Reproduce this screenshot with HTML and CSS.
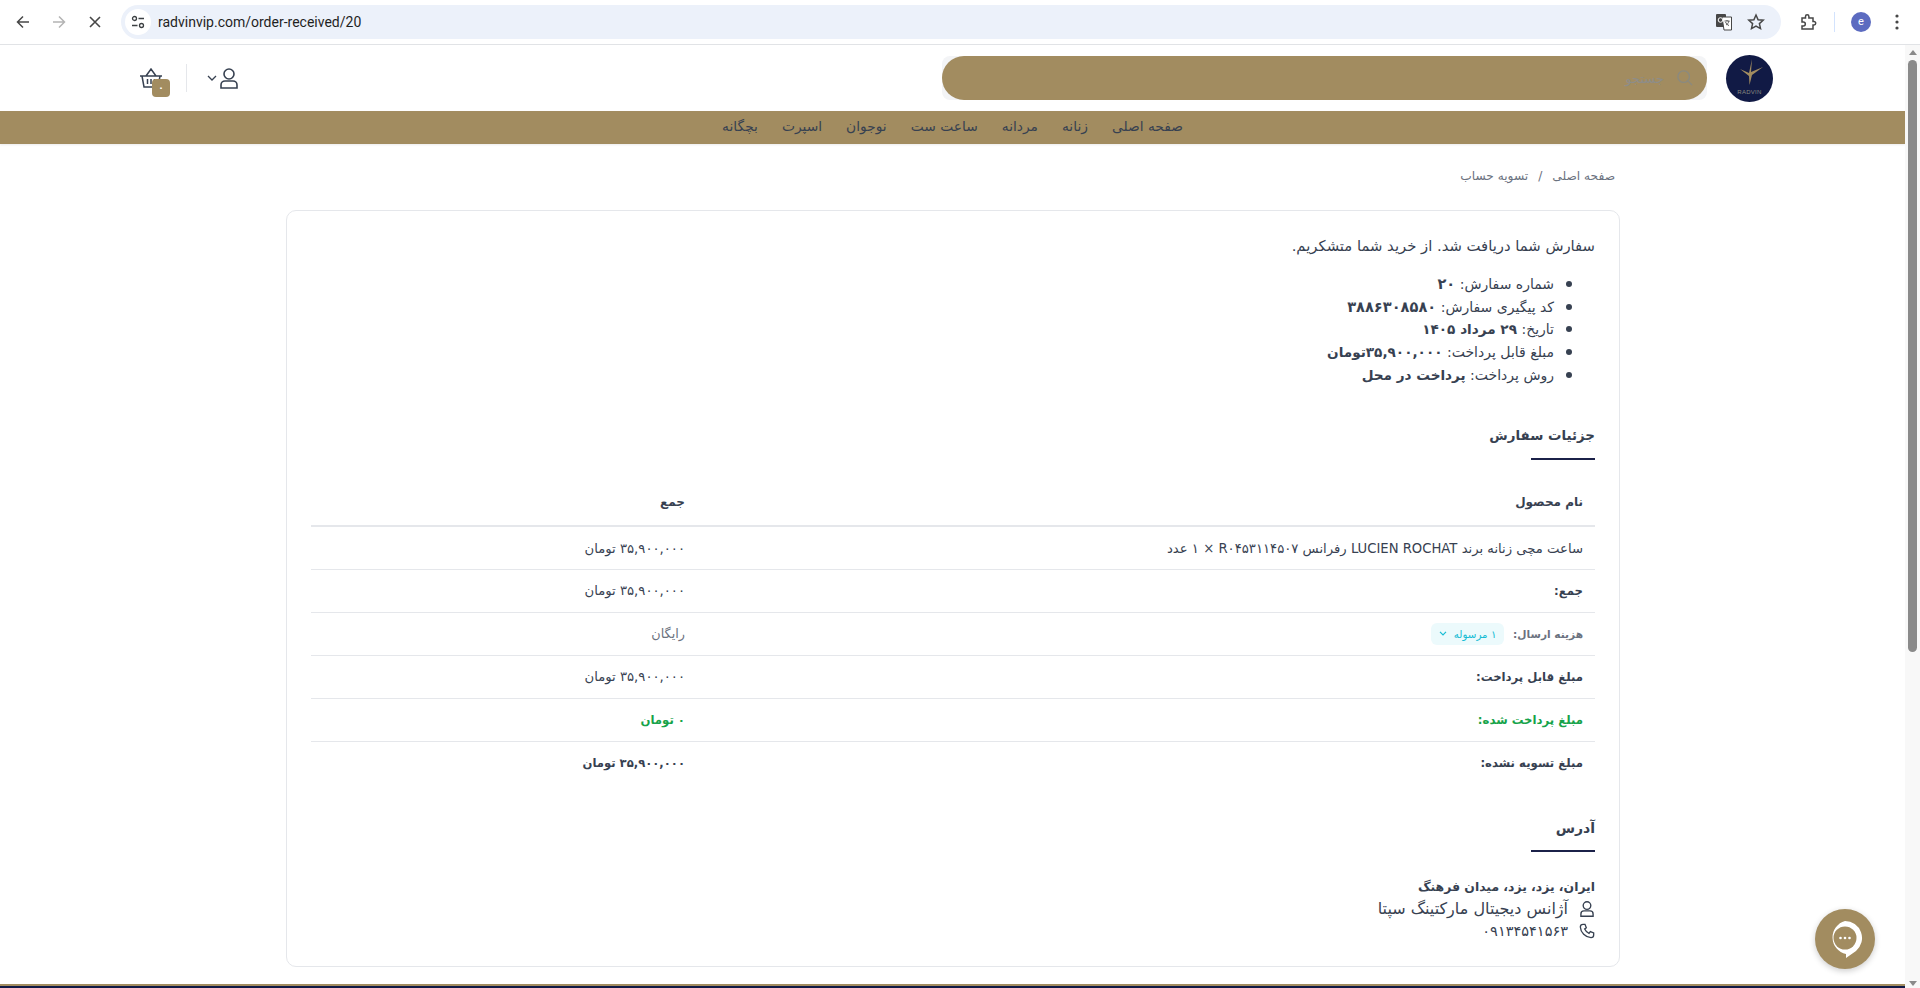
FILE: index.html
```html
<!DOCTYPE html>
<html lang="fa">
<head>
    <meta charset="UTF-8">
    <meta name="viewport" content="width=device-width, initial-scale=1.0">
    <title>radvinvip.com/order-received/20</title>
    <link rel="stylesheet" href="styles.css">
</head>
<body>
    <div class="browser-bar">
        <button class="bar-btn"><svg width="16" height="16" viewBox="0 0 16 16" fill="none" stroke="#474747" stroke-width="1.5"><path d="M14 8H2.500M8 2.500 2.500 8 8 13.500"/></svg></button>
        <button class="bar-btn"><svg width="16" height="16" viewBox="0 0 16 16" fill="none" stroke="#b4b4b4" stroke-width="1.5"><path d="M2 8h11.500M8 2.500 13.500 8 8 13.500"/></svg></button>
        <button class="bar-btn"><svg width="16" height="16" viewBox="0 0 16 16" fill="none" stroke="#474747" stroke-width="1.6"><path d="M3 3l10 10M13 3 3 13"/></svg></button>
        <div class="url-box">
            <span class="url-chip"><svg width="14" height="14" viewBox="0 0 14 14" fill="none" stroke="#3c4043" stroke-width="1.3"><circle cx="3.500" cy="3.500" r="2"/><path d="M7.500 3.500H13M1 10.500h5.500"/><circle cx="10.500" cy="10.500" r="2"/></svg></span>
            <span class="url-text">radvinvip.com/order-received/20</span>
            <span class="url-actions">
                <svg width="18" height="18" viewBox="0 0 18 18"><rect x="1" y="1" width="10" height="13" rx="1" fill="#474747"/><path d="M7 4h9.500v13H9z" fill="#fff" stroke="#474747"/><path d="M9.500 8h5M12 7v1M14 8c-.5 2-2 3.500-3 4M10.500 9c.6 1.500 2 3 3.500 3.500" stroke="#474747" fill="none" stroke-width=".9"/><circle cx="5.500" cy="7" r="2.300" fill="none" stroke="#fff"/></svg>
                <svg width="18" height="18" viewBox="0 0 18 18" fill="none" stroke="#474747" stroke-width="1.5"><path d="M9 2l2.100 4.700 5.100.5-3.800 3.400 1.100 5L9 13l-4.500 2.600 1.100-5L1.800 7.200l5.100-.5z"/></svg>
            </span>
        </div>
        <button class="bar-btn ext-btn"><svg width="18" height="18" viewBox="0 0 18 18" fill="none" stroke="#474747" stroke-width="1.5"><path d="M3 5h3.500V3.500a1.700 1.700 0 0 1 3.400 0V5H14v3.500h1a1.700 1.700 0 0 1 0 3.400h-1V16H3v-3h1.300a2 2 0 0 0 0-4H3z"/></svg></button>
        <span class="bar-sep"></span>
        <span class="avatar">e</span>
        <button class="bar-btn dots-btn"><svg width="4" height="16" viewBox="0 0 4 16" fill="#474747"><circle cx="2" cy="2" r="1.600"/><circle cx="2" cy="8" r="1.600"/><circle cx="2" cy="14" r="1.600"/></svg></button>
    </div>

    <div class="viewport">
        <div class="page">
            <header class="site-header">
                <div class="brand-side">
                    <div class="logo">
                        <svg width="30" height="30" viewBox="0 0 30 30" fill="#a28c60"><path d="M17 1l-1 13 12-5-11 8-2.500 10L14 18 5 11l9 4z"/></svg>
                        <span class="logo-text">RADVIN</span>
                    </div>
                    <div class="search-wrap">
                        <div class="search-box">
                            <svg width="16" height="16" viewBox="0 0 18 18" fill="none" stroke="#8a8a80" stroke-width="1.500"><circle cx="7.500" cy="7.500" r="6.500"/><path d="M12.500 12.500 17 17"/></svg>
                            <span class="search-hint">جستجو</span>
                        </div>
                    </div>
                </div>
                <div class="user-side">
                    <div class="user-menu">
                        <svg width="18" height="21" viewBox="0 0 18 21" fill="none" stroke="#374151" stroke-width="1.600"><circle cx="9" cy="6" r="5"/><path d="M1 20v-3a4 4 0 0 1 4-4h8a4 4 0 0 1 4 4v3z"/></svg>
                        <svg width="10" height="6" viewBox="0 0 10 6" fill="none" stroke="#374151" stroke-width="1.300"><path d="M1 1l4 4 4-4"/></svg>
                    </div>
                    <span class="user-sep"></span>
                    <div class="cart">
                        <svg width="24" height="20" viewBox="0 0 24 20" fill="none" stroke="#374151" stroke-width="1.500"><path d="M1 8h22M3 8l2 11h14l2-11M7 8l5-7 5 7M8.500 11v5M12 11v5M15.500 11v5"/></svg>
                        <span class="cart-badge">۰</span>
                    </div>
                </div>
            </header>

            <nav class="main-nav">
                <a href="#">صفحه اصلی</a>
                <a href="#">زنانه</a>
                <a href="#">مردانه</a>
                <a href="#">ساعت ست</a>
                <a href="#">نوجوان</a>
                <a href="#">اسپرت</a>
                <a href="#">بچگانه</a>
            </nav>

            <div class="crumbs">
                <a href="#">صفحه اصلی</a>
                <span>/</span>
                <a href="#">تسویه حساب</a>
            </div>

            <main class="order-card">
                <p class="thanks">سفارش شما دریافت شد. از خرید شما متشکریم.</p>
                <ul class="order-info">
                    <li>شماره سفارش: <strong class="info-num">۲۰</strong></li>
                    <li>کد پیگیری سفارش: <strong class="info-num">۳۸۸۶۳۰۸۵۸۰</strong></li>
                    <li>تاریخ: <strong>۲۹ مرداد ۱۴۰۵</strong></li>
                    <li>مبلغ قابل پرداخت: <strong>۳۵,۹۰۰,۰۰۰تومان</strong></li>
                    <li>روش پرداخت: <strong>پرداخت در محل</strong></li>
                </ul>

                <h2 class="section-title">جزئیات سفارش</h2>
                <table class="order-table">
                    <thead>
                        <tr><th>نام محصول</th><th class="total-col">جمع</th></tr>
                    </thead>
                    <tbody>
                        <tr><td>ساعت مچی زنانه برند LUCIEN ROCHAT رفرانس <bdi>R۰۴۵۳۱۱۴۵۰۷</bdi> × ۱ عدد</td><td>۳۵,۹۰۰,۰۰۰ تومان</td></tr>
                        <tr><th>جمع:</th><td>۳۵,۹۰۰,۰۰۰ تومان</td></tr>
                        <tr class="muted-row"><th>هزینه ارسال: <span class="ship-pill">۱ مرسوله <svg width="8" height="5" viewBox="0 0 8 5" fill="none" stroke="#17bcd4" stroke-width="1.200"><path d="M1 .8l3 3 3-3"/></svg></span></th><td>رایگان</td></tr>
                        <tr><th>مبلغ قابل پرداخت:</th><td>۳۵,۹۰۰,۰۰۰ تومان</td></tr>
                        <tr class="paid-row"><th>مبلغ پرداخت شده:</th><td>۰ تومان</td></tr>
                        <tr class="due-row"><th>مبلغ تسویه نشده:</th><td>۳۵,۹۰۰,۰۰۰ تومان</td></tr>
                    </tbody>
                </table>

                <h2 class="section-title address-title">آدرس</h2>
                <div class="address">
                    <strong>ایران، یزد، یزد، میدان فرهنگ</strong>
                    <div class="address-line">
                        <svg width="16" height="16" viewBox="0 0 18 21" fill="none" stroke="#374151" stroke-width="1.800"><circle cx="9" cy="6" r="5"/><path d="M1 20v-3a4 4 0 0 1 4-4h8a4 4 0 0 1 4 4v3z"/></svg>
                        <span class="addr-name">آژانس دیجیتال مارکتینگ سپتا</span>
                    </div>
                    <div class="address-line">
                        <svg width="16" height="16" viewBox="0 0 24 24" fill="none" stroke="#374151" stroke-width="2"><path d="M6 2 9 2l2 5-2.500 2a13 13 0 0 0 6.500 6.500L17 13l5 2v3a4 4 0 0 1-4 4C9.500 21.500 2.500 14.500 2 6a4 4 0 0 1 4-4z"/></svg>
                        <span class="addr-phone">۰۹۱۳۴۵۴۱۵۶۳</span>
                    </div>
                </div>
            </main>

            <div class="footer-strip"></div>

            <div class="chat-btn">
                <svg width="36" height="38" viewBox="0 0 36 38"><path d="M18 1a17 17 0 0 1 11 30l-10 7v-4A17 17 0 0 1 18 1z" fill="#fff"/><circle cx="18" cy="18" r="11.500" fill="#a28c60"/><circle cx="13.500" cy="18" r="1.300" fill="#fff"/><circle cx="18" cy="18" r="1.300" fill="#fff"/><circle cx="22.500" cy="18" r="1.300" fill="#fff"/></svg>
            </div>
        </div>

        <div class="scroll-track">
            <span class="arrow-up"></span>
            <span class="scroll-thumb"></span>
            <span class="arrow-down"></span>
        </div>
    </div>
</body>
</html>
```

FILE: styles.css
```css
* {
    box-sizing: border-box;
}
html, body {
    height: 100%;
}
body {
    margin: 0;
    font-family: "DejaVu Sans", sans-serif;
    color: #374151;
    background-color: white;
    overflow: hidden;
}
a {
    color: inherit;
    text-decoration: none;
}

/* browser bar */
.browser-bar {
    height: 45px;
    display: flex;
    align-items: center;
    padding: 0 13px 1px 5px;
    background-color: white;
    border-bottom: 1px solid #e1e3e6;
    direction: ltr;
}
.bar-btn {
    width: 36px;
    height: 32px;
    padding: 0;
    border: none;
    background: none;
    display: flex;
    align-items: center;
    justify-content: center;
}
.url-box {
    flex: 1;
    height: 34px;
    margin-left: 8px;
    margin-right: 9px;
    padding: 0 16px 0 4px;
    display: flex;
    align-items: center;
    background-color: #ecf1fa;
    border-radius: 17px;
}
.url-chip {
    width: 26px;
    height: 26px;
    border-radius: 50%;
    background-color: white;
    display: flex;
    align-items: center;
    justify-content: center;
}
.url-text {
    margin-left: 7px;
    font-family: Roboto, sans-serif;
    font-size: 14px;
    color: #1f1f1f;
}
.url-actions {
    margin-left: auto;
    display: flex;
    gap: 14px;
    align-items: center;
}
.ext-btn {
    width: 35px;
}
.bar-sep {
    width: 1px;
    height: 20px;
    margin: 0 16px 0 9px;
    background-color: #d3e3fd;
}
.avatar {
    width: 20px;
    height: 20px;
    border-radius: 50%;
    background-color: #5c6bc0;
    color: white;
    font-family: Roboto, sans-serif;
    font-size: 11px;
    display: flex;
    align-items: center;
    justify-content: center;
}
.dots-btn {
    width: 20px;
    margin-left: 16px;
}

/* page */
.viewport {
    height: 943px;
    display: flex;
}
.page {
    flex: 1;
    position: relative;
    direction: rtl;
    overflow: hidden;
    display: flex;
    flex-direction: column;
}
.scroll-track {
    width: 15px;
    background-color: #f8f8f8;
    display: flex;
    flex-direction: column;
    align-items: center;
    padding-top: 5px;
}
.arrow-up {
    width: 0;
    height: 0;
    border-left: 4px solid transparent;
    border-right: 4px solid transparent;
    border-bottom: 5px solid #8a8a8a;
}
.scroll-thumb {
    width: 9px;
    height: 592px;
    margin-top: 5px;
    background-color: #8a8a8a;
    border-radius: 5px;
}
.arrow-down {
    width: 0;
    height: 0;
    margin-top: auto;
    margin-bottom: 2px;
    border-left: 4px solid transparent;
    border-right: 4px solid transparent;
    border-top: 5px solid #8a8a8a;
}

/* header */
.site-header {
    height: 66px;
    flex-shrink: 0;
    padding: 0 132px 0 139px;
    display: flex;
    align-items: center;
    justify-content: space-between;
}
.brand-side {
    display: flex;
    align-items: center;
    gap: 19px;
}
.logo {
    width: 47px;
    height: 47px;
    padding-top: 3px;
    border-radius: 50%;
    background-color: #111a45;
    display: flex;
    flex-direction: column;
    align-items: center;
    overflow: hidden;
    direction: ltr;
}
.logo-text {
    font-family: "Liberation Sans", sans-serif;
    font-size: 6px;
    letter-spacing: .3px;
    color: #8a8a80;
    margin-top: 1px;
}
.search-wrap {
    width: 765px;
    height: 44px;
    background-color: #f3f4f6;
    border-radius: 8px;
}
.search-box {
    height: 44px;
    padding: 0 14px;
    background-color: #a28c60;
    border-radius: 22px;
    display: flex;
    align-items: center;
    gap: 13px;
}
.search-hint {
    font-size: 13px;
    color: #8d8d8a;
}
.user-side {
    display: flex;
    align-items: center;
}
.user-menu {
    display: flex;
    align-items: center;
    gap: 3px;
}
.user-sep {
    width: 1px;
    height: 28px;
    margin: 0 20px 0 23px;
    background-color: #e5e7eb;
}
.cart {
    position: relative;
    width: 24px;
    height: 20px;
}
.cart-badge {
    position: absolute;
    top: 11px;
    left: 13px;
    width: 18px;
    height: 18px;
    border-radius: 4px;
    background-color: #a28c60;
    color: white;
    font-size: 9px;
    font-weight: bold;
    display: flex;
    align-items: center;
    justify-content: center;
}

/* nav */
.main-nav {
    height: 33px;
    flex-shrink: 0;
    padding-bottom: 3px;
    background-color: #a28c60;
    display: flex;
    align-items: center;
    justify-content: center;
    gap: 24px;
    font-size: 13.8px;
    color: #374151;
    box-shadow: 0 1px 2px rgba(0, 0, 0, .08);
}

/* breadcrumb */
.crumbs {
    flex-shrink: 0;
    height: 66px;
    padding: 0 290px 2px 0;
    display: flex;
    align-items: center;
    gap: 10px;
    font-size: 12.2px;
    color: #6b7280;
}

/* order card */
.order-card {
    flex-shrink: 0;
    width: 1334px;
    height: 757px;
    margin-right: 285px;
    padding: 23px 24px 0;
    border: 1px solid #e5e7eb;
    border-radius: 10px;
    background-color: white;
}
.thanks {
    margin: 0;
    font-size: 14.8px;
    line-height: 24px;
}
.order-info {
    margin: 14px 0 0;
    padding: 0 41px 0 0;
    font-size: 14px;
    line-height: 22px;
}
.order-info li {
    height: 22.7px;
}
.order-info li::marker {
    font-size: 18px;
}
.order-info strong {
    font-size: 13.6px;
    line-height: 1;
}
.order-info .info-num {
    font-size: 14.6px;
}
.section-title {
    margin: 0;
    padding: 40px 0 13px;
    font-size: 13.4px;
    font-weight: bold;
    line-height: 22px;
    position: relative;
}
.section-title::after {
    content: "";
    position: absolute;
    right: 0;
    bottom: 0;
    width: 64px;
    height: 2px;
    background-color: #1b2149;
}
.order-table {
    width: 100%;
    margin-top: 18px;
    border-collapse: collapse;
    font-size: 13.2px;
}
.order-table th, .order-table td {
    height: 43px;
    padding: 0 12px;
    text-align: right;
    border-bottom: 1px solid #e5e7eb;
}
.order-table th {
    font-size: 11.7px;
    font-weight: bold;
}
.order-table thead th {
    height: 48px;
    font-size: 12px;
    border-bottom: 2px solid #e5e7eb;
}
.total-col {
    width: 386px;
}
.order-table tbody tr:last-child th, .order-table tbody tr:last-child td {
    border-bottom: none;
}
.muted-row th {
    font-size: 10.6px;
    color: #6b7280;
}
.muted-row td {
    color: #6b7280;
    font-size: 12.8px;
}
.ship-pill {
    display: inline-flex;
    align-items: center;
    gap: 7px;
    height: 22px;
    margin-right: 5px;
    padding: 0 8px;
    background-color: #ecfafc;
    border-radius: 6px;
    color: #17bcd4;
    font-size: 10.3px;
    font-weight: normal;
}
.paid-row th, .paid-row td {
    color: #16a34a;
    font-weight: bold;
    font-size: 11.7px;
}
.due-row td {
    font-size: 11.6px;
    font-weight: bold;
}
.address-title {
    padding-top: 33px;
    padding-bottom: 13px;
    font-size: 14px;
}
.address {
    margin-top: 24px;
    font-size: 12.4px;
    line-height: 22px;
}
.address-line {
    display: flex;
    align-items: center;
    gap: 11px;
    height: 22px;
}
.addr-name {
    font-size: 16px;
    line-height: 1;
}
.addr-phone {
    font-size: 14.5px;
    line-height: 1;
}

.footer-strip {
    flex-shrink: 0;
    height: 4px;
    margin-top: 17px;
    background: linear-gradient(#a28c60 0 2px, #111a45 2px);
}

.chat-btn {
    position: absolute;
    left: 1815px;
    top: 864px;
    width: 60px;
    height: 60px;
    border-radius: 50%;
    background-color: #a28c60;
    display: flex;
    align-items: center;
    justify-content: center;
    box-shadow: 0 2px 6px rgba(0, 0, 0, .2);
}
```
